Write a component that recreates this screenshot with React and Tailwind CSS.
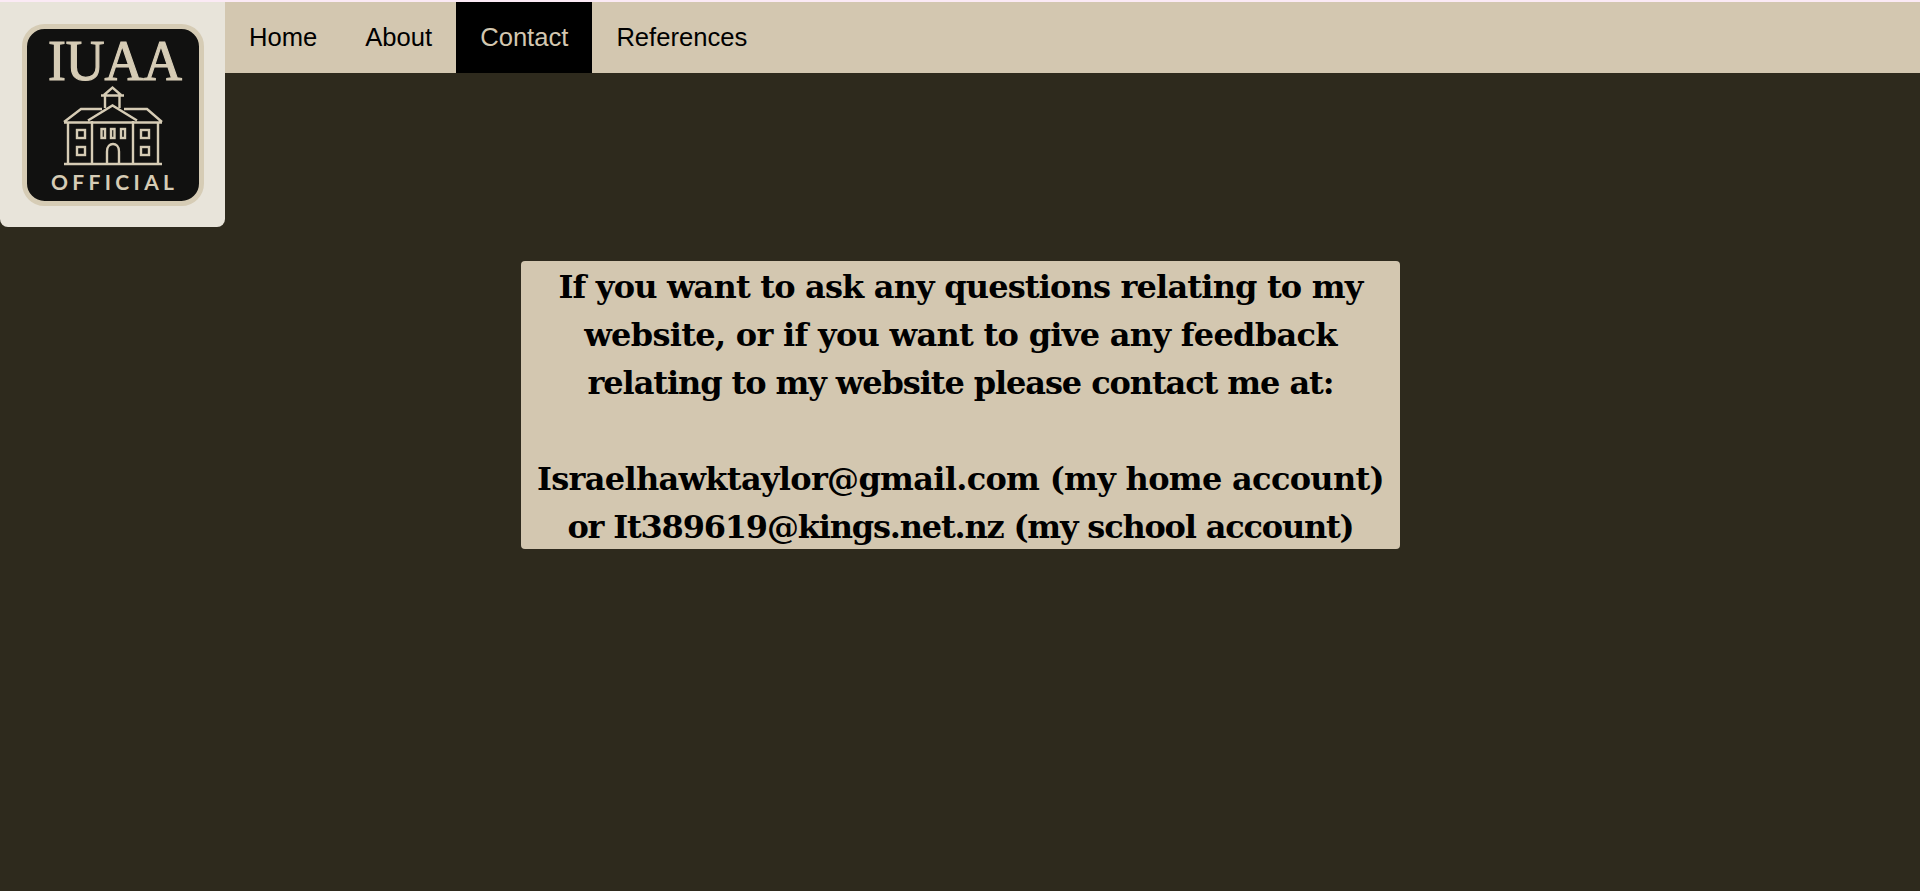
import React from 'react'

const links = [
    { label: 'Home' },
    { label: 'About' },
    { label: 'Contact', active: true },
    { label: 'References' },
]

function Logo() {
    return (
        <svg viewBox="0 2 225 225" className="block w-[225px] h-[225px]" fill="none" stroke="#d6ccb5" strokeWidth="2.4">
            <rect x="24.500" y="26.500" width="177" height="177" rx="20" fill="#111110" strokeWidth="5" />
            <text x="48" y="80" textLength="134" lengthAdjust="spacingAndGlyphs" fontFamily="'Liberation Serif', serif" fontSize="57" fill="#d6ccb5" stroke="#d6ccb5" strokeWidth="1.2">IUAA</text>
            {/* cupola */}
            <path d="M101 95.500H124M105 96V108M119.500 96V108M104 95L112.500 87.500L121 95" />
            {/* roofs */}
            <path d="M64 122.500H162M64 122L81 109H102M124 109H147L162 122M88 120.500L112.500 105.500L137 120.500" />
            {/* walls and base */}
            <path d="M68 122V164M92 121V164M133 121V164M158 122V164M64 164H162" />
            {/* side windows */}
            <rect x="77" y="130" width="8" height="8" />
            <rect x="77" y="147" width="8" height="8" />
            <rect x="141" y="130" width="8" height="8" />
            <rect x="141" y="147" width="8" height="8" />
            {/* centre windows */}
            <rect x="101.500" y="129" width="3.500" height="9" />
            <rect x="111" y="129" width="3.500" height="9" />
            <rect x="121" y="129" width="4" height="9" />
            {/* door */}
            <path d="M107 163V151.500C107 141.500 119 141.500 119 151.500V163" />
            <text x="51" y="190" textLength="123" fontFamily="Lato, sans-serif" fontWeight="700" fontSize="21" fill="#d6ccb5" stroke="none">OFFICIAL</text>
        </svg>
    )
}

function App() {
    return (
        <div className="min-h-screen bg-[#2e2a1d] font-['Liberation_Sans',sans-serif]">
            <div className="h-[2px] bg-[#fbeaf5]"></div>
            <header className="flex items-start">
                <div className="w-[225px] h-[225px] shrink-0 bg-[#e8e4da] rounded-b-lg">
                    <Logo />
                </div>
                <nav className="flex flex-1 h-[71px] bg-[#d3c7b0]">
                    {links.map((link) => (
                        <a
                            key={link.label}
                            href="#"
                            className={`flex items-center px-6 text-[25.6px] ${link.active ? 'bg-black text-[#d3c7b0]' : 'text-black'}`}
                        >
                            {link.label}
                        </a>
                    ))}
                </nav>
            </header>
            <main className="mt-[34px]">
                <div className="ml-[521px] w-[879px] h-[288px] pt-[2px] rounded-[4px] bg-[#d3c7b0] text-center text-black font-['DejaVu_Serif',serif] font-bold text-[32px] leading-[48px] tracking-[-0.7px]">
                    <span className="tracking-[-0.83px]">If you want to ask any questions relating to my</span><br />
                    website, or if you want to give any feedback<br />
                    <span className="tracking-[-1.1px]">relating to my website please contact me at:</span><br />
                    <br />
                    Israelhawktaylor@gmail.com (my home account)<br />
                    <span className="tracking-[-1.2px]">or It389619@kings.net.nz (my school account)</span>
                </div>
            </main>
        </div>
    )
}

export default App
